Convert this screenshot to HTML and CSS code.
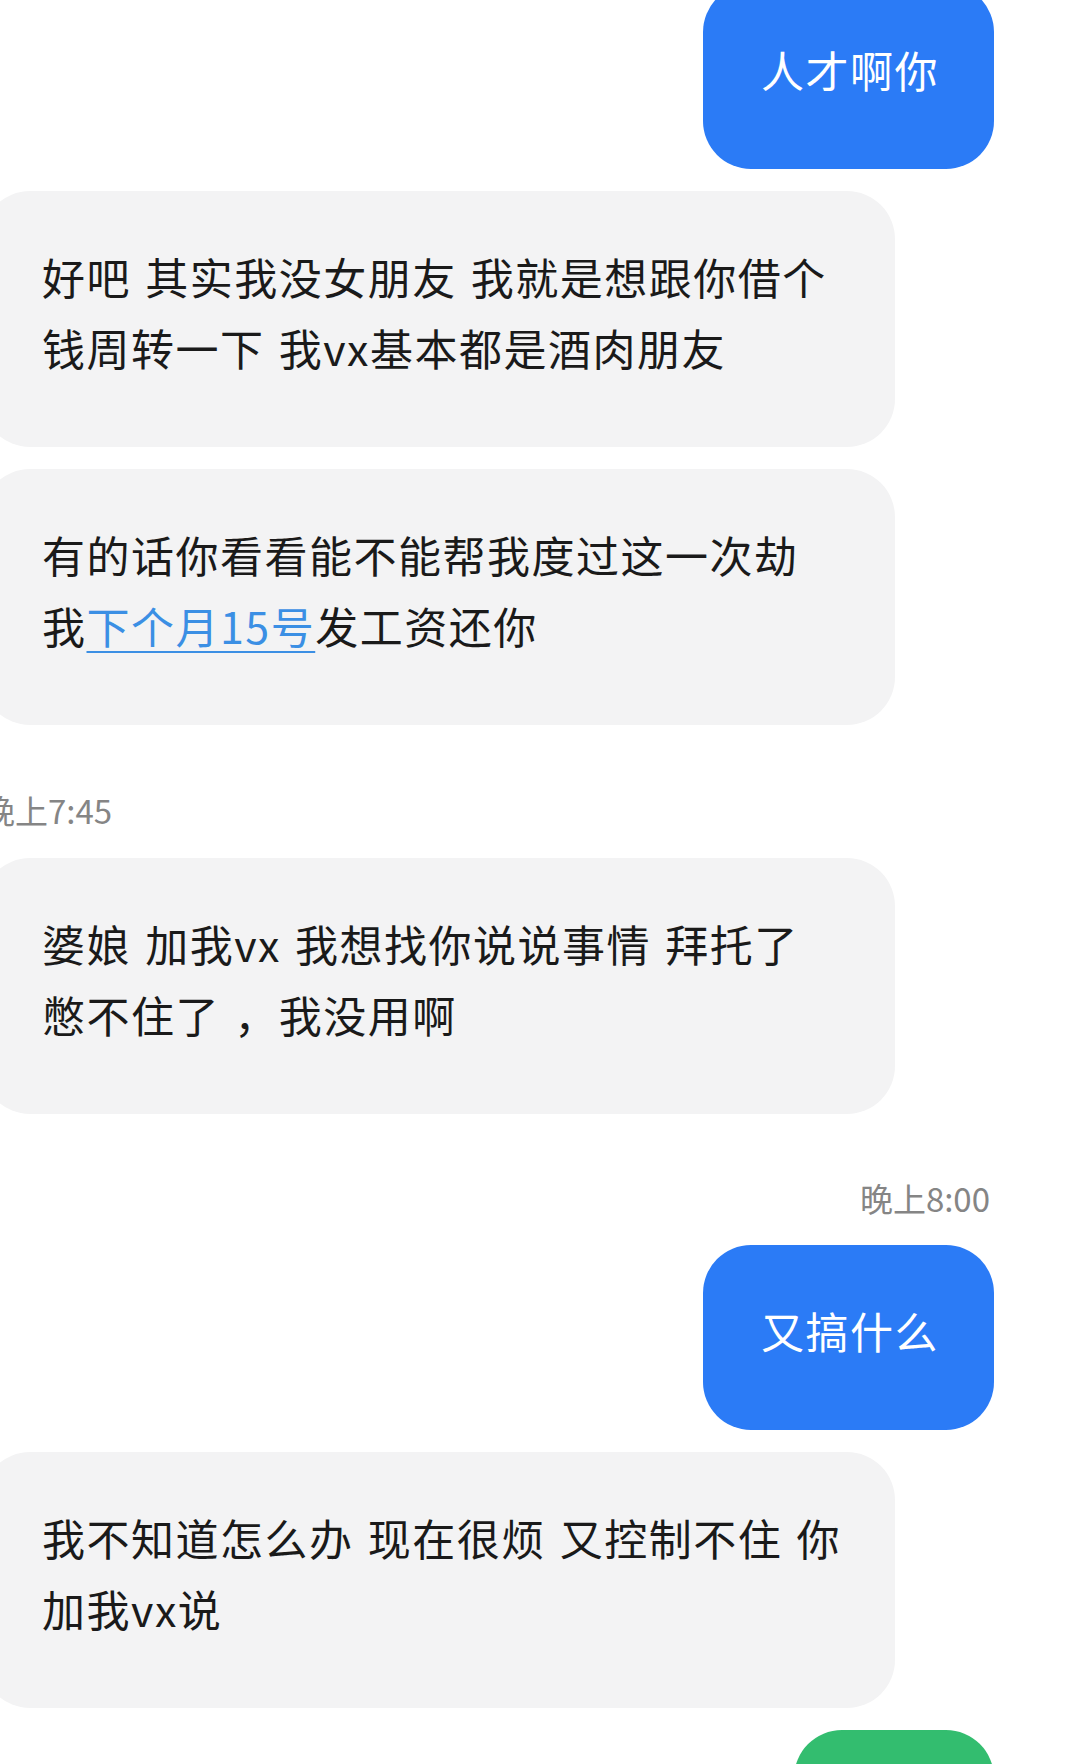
FILE: index.html
```html
<!DOCTYPE html>
<html lang="zh-CN">
<head>
<meta charset="utf-8">
<title>聊天</title>
<link rel="stylesheet" href="styles.css">
</head>
<body>
<div class="chat">
  <div class="row row-right first">
    <div class="bubble bubble-blue">人才啊你</div>
  </div>
  <div class="row row-left">
    <div class="bubble bubble-gray">好吧 其实我没女朋友 我就是想跟你借个<br>钱周转一下 我vx基本都是酒肉朋友</div>
  </div>
  <div class="row row-left">
    <div class="bubble bubble-gray">有的话你看看能不能帮我度过这一次劫<br>我<span class="link">下个月15号</span>发工资还你</div>
  </div>
  <div class="time time-left">晚上7:45</div>
  <div class="row row-left after-time">
    <div class="bubble bubble-gray">婆娘 加我vx 我想找你说说事情 拜托了<br>憋不住了 ，我没用啊</div>
  </div>
  <div class="time time-right">晚上8:00</div>
  <div class="row row-right after-time-right">
    <div class="bubble bubble-blue">又搞什么</div>
  </div>
  <div class="row row-left">
    <div class="bubble bubble-gray">我不知道怎么办 现在很烦 又控制不住 你<br>加我vx说</div>
  </div>
  <div class="row row-right">
    <div class="bubble bubble-green"></div>
  </div>
</div>
</body>
</html>
```

FILE: styles.css
```css
html, body {
  margin: 0;
  padding: 0;
  background: #ffffff;
  overflow: hidden;
  height: 1764px;
}

.chat {
  display: flex;
  flex-direction: column;
  gap: 22px;
  padding: 0 86px 0 0;
  margin-left: -18px;
  margin-top: -16px;
  font-family: "Noto Sans CJK SC", "Noto Sans", sans-serif;
}

.row {
  display: flex;
}

.row-right {
  justify-content: flex-end;
}

.row-left {
  justify-content: flex-start;
}

.bubble {
  box-sizing: border-box;
  font-size: 43px;
  line-height: 71px;
  letter-spacing: 1.5px;
  word-spacing: 3px;
  white-space: nowrap;
  padding: 50px 58px 64px 60px;
  border-radius: 48px;
}

.bubble-blue {
  background: #2b7bf6;
  color: #ffffff;
  padding-left: 58px;
  padding-right: 55px;
}

.bubble-gray {
  background: #f3f3f4;
  color: #1a1a1a;
  width: 913px;
}

.bubble-green {
  background: #33bd6f;
  width: 200px;
  height: 184px;
  padding: 0;
}

.link {
  color: #3b8fe4;
  text-decoration: underline;
  text-decoration-thickness: 2px;
  text-underline-offset: 7px;
}

.time {
  font-size: 33px;
  line-height: 40px;
  color: #858585;
  letter-spacing: 0;
}

.time-left {
  margin-top: 43px;
  align-self: flex-start;
  margin-left: 0;
}

.time-right {
  margin-top: 42px;
  align-self: flex-end;
  margin-right: 4px;
}

.row.after-time {
  margin-top: 6px;
}

.row.after-time-right {
  margin-top: 5px;
}
```
